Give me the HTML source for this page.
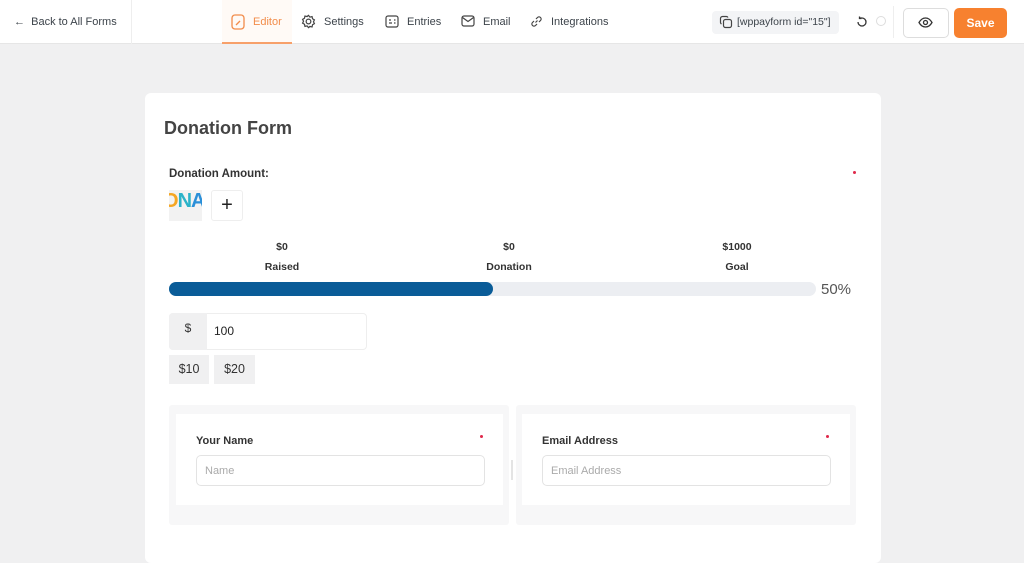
<!DOCTYPE html>
<html><head><meta charset="utf-8"><style>
*{box-sizing:border-box;margin:0;padding:0}
body{width:1024px;height:550px;overflow:hidden;background:#f0f0f1;font-family:"Liberation Sans",sans-serif;color:#1e1e1e;position:relative}
.a{position:absolute}
.hdr{left:0;top:0;width:1024px;height:44px;background:#fff;border-bottom:1px solid #e6e6e6}
.t{font-size:11px;color:#3c434a;white-space:nowrap}
.card{left:145px;top:93px;width:736px;height:470px;background:#fff;border-radius:6px}
.b{font-weight:bold;font-size:10.5px;color:#333;text-align:center;width:80px}
</style></head><body>
<div class="a hdr"></div>
<div class="a" style="left:131px;top:0;width:1px;height:44px;background:#eee"></div>
<div class="a t" style="left:14px;top:16px">←&nbsp; Back to All Forms</div>
<div class="a" style="left:222px;top:0;width:70px;height:44px;background:#fffaf6;border-bottom:2px solid #f7a06a"></div>
<svg class="a" style="left:231px;top:14px" width="14" height="16" viewBox="0 0 14 16" fill="none" stroke="#f28c4a" stroke-width="1.3"><rect x="1" y="1" width="12" height="14" rx="3"/><path d="M5 11l4-4"/></svg>
<div class="a t" style="left:253px;top:16px;color:#f28c4a">Editor</div>
<svg class="a" style="left:301px;top:14px" width="15" height="15" viewBox="0 0 16 16" fill="none" stroke="#444" stroke-width="1.3"><circle cx="8" cy="8" r="2.5"/><path d="M8 1.5l1.5 1.8 2.3-.5.5 2.3 2 1.2-1 2 1 2-2 1.2-.5 2.3-2.3-.5L8 14.5l-1.5-1.8-2.3.5-.5-2.3-2-1.2 1-2-1-2 2-1.2.5-2.3 2.3.5z"/></svg>
<div class="a t" style="left:324px;top:16px">Settings</div>
<svg class="a" style="left:385px;top:15px" width="14" height="13" viewBox="0 0 14 13" fill="none" stroke="#444" stroke-width="1.2"><rect x="1" y="1" width="12" height="11" rx="2"/><path d="M4 5h2M4 8h3M9 5h1.5M9 8h1.5"/></svg>
<div class="a t" style="left:407px;top:16px">Entries</div>
<svg class="a" style="left:461px;top:15px" width="14" height="12" viewBox="0 0 14 12" fill="none" stroke="#444" stroke-width="1.2"><rect x="1" y="1" width="12" height="10" rx="2"/><path d="M1.5 2.5L7 6.5l5.5-4"/></svg>
<div class="a t" style="left:483px;top:16px">Email</div>
<svg class="a" style="left:530px;top:15px" width="13" height="13" viewBox="0 0 13 13" fill="none" stroke="#444" stroke-width="1.2"><path d="M5.5 7.5l2-2M4 6L2.5 7.5a2.1 2.1 0 003 3L7 9M9 7l1.5-1.5a2.1 2.1 0 00-3-3L6 4"/></svg>
<div class="a t" style="left:551px;top:16px">Integrations</div>
<div class="a" style="left:712px;top:11px;width:127px;height:23px;background:#f3f4f6;border-radius:4px"></div>
<svg class="a" style="left:719px;top:15px" width="14" height="14" viewBox="0 0 14 14" fill="none" stroke="#444" stroke-width="1.2"><rect x="4.5" y="4.5" width="8" height="8" rx="2"/><path d="M9 2.5A2 2 0 007.5 1.5h-4a2 2 0 00-2 2v4a2 2 0 001 1.5"/></svg>
<div class="a t" style="left:737px;top:16px;font-size:10.5px">[wppayform id="15"]</div>
<svg class="a" style="left:856px;top:16px" width="12" height="12" viewBox="0 0 12 12" fill="none" stroke="#333" stroke-width="1.3"><path d="M2 6a4 4 0 104-4H3.5M3.5 0.5V2.5h2"/></svg>
<div class="a" style="left:876px;top:16px;width:10px;height:10px;border:1.3px solid #ddd;border-radius:50%"></div>
<div class="a" style="left:893px;top:6px;width:1px;height:32px;background:#eee"></div>
<div class="a" style="left:903px;top:8px;width:46px;height:30px;border:1px solid #ddd;border-radius:5px;background:#fff"></div>
<svg class="a" style="left:918px;top:17px" width="15" height="11" viewBox="0 0 15 11" fill="none" stroke="#333" stroke-width="1.3"><path d="M1 5.5C3 2 5 1 7.5 1S12 2 14 5.5C12 9 10 10 7.5 10S3 9 1 5.5z"/><circle cx="7.5" cy="5.5" r="2"/></svg>
<div class="a" style="left:954px;top:8px;width:53px;height:30px;background:#f7812f;border-radius:5px;color:#fff;font-weight:bold;font-size:12px;text-align:center;line-height:30px">Save</div>

<div class="a card"></div>
<div class="a" style="left:164px;top:118px;font-size:18px;font-weight:bold;color:#444">Donation Form</div>
<div class="a" style="left:169px;top:168px;font-size:11.5px;font-weight:bold;color:#333">Donation Amount:</div>
<div class="a" style="left:853px;top:171px;width:3px;height:3px;border-radius:50%;background:#e0284a"></div>
<div class="a" style="left:169px;top:190px;width:33px;height:31px;background:#f2f2f2;overflow:hidden;font-weight:bold;font-size:20px;line-height:22px;letter-spacing:-1px"><span style="color:#f5a623;margin-left:-6px">O</span><span style="color:#2bb3c9">N</span><span style="color:#2a8fd8">A</span></div>
<div class="a" style="left:211px;top:190px;width:32px;height:31px;border:1px solid #eee;border-radius:3px;text-align:center;font-size:20px;line-height:29px;color:#222">+</div>
<div class="a b" style="left:242px;top:241px">$0</div>
<div class="a b" style="left:242px;top:261px">Raised</div>
<div class="a b" style="left:469px;top:241px">$0</div>
<div class="a b" style="left:469px;top:261px">Donation</div>
<div class="a b" style="left:697px;top:241px">$1000</div>
<div class="a b" style="left:697px;top:261px">Goal</div>
<div class="a" style="left:169px;top:282px;width:647px;height:14px;background:#eceef2;border-radius:7px"></div>
<div class="a" style="left:169px;top:282px;width:324px;height:14px;background:#0a5c98;border-radius:7px"></div>
<div class="a" style="left:821px;top:281px;font-size:15px;color:#555">50%</div>
<div class="a" style="left:169px;top:313px;width:198px;height:37px;border:1px solid #eee;border-radius:4px;background:#fff"></div>
<div class="a" style="left:169px;top:313px;width:38px;height:37px;background:#f0f0f1;border-radius:4px 0 0 4px;text-align:center;font-size:12px;line-height:30px;color:#333">$</div>
<div class="a" style="left:214px;top:324px;font-size:12px;color:#222">100</div>
<div class="a" style="left:169px;top:355px;width:40px;height:29px;background:#f0f0f1;text-align:center;line-height:29px;font-size:12.5px;color:#333">$10</div>
<div class="a" style="left:214px;top:355px;width:41px;height:29px;background:#f0f0f1;text-align:center;line-height:29px;font-size:12.5px;color:#333">$20</div>

<div class="a" style="left:169px;top:405px;width:340px;height:120px;background:#f7f7f8;border-radius:3px"></div>
<div class="a" style="left:176px;top:414px;width:327px;height:91px;background:#fff"></div>
<div class="a" style="left:516px;top:405px;width:340px;height:120px;background:#f7f7f8;border-radius:3px"></div>
<div class="a" style="left:522px;top:414px;width:328px;height:91px;background:#fff"></div>
<div class="a" style="left:511px;top:460px;width:2px;height:20px;background:#e4e4e4"></div>
<div class="a" style="left:196px;top:435px;font-size:11px;font-weight:bold;color:#333">Your Name</div>
<div class="a" style="left:480px;top:435px;width:3px;height:3px;border-radius:50%;background:#e0284a"></div>
<div class="a" style="left:196px;top:455px;width:289px;height:31px;border:1px solid #e3e3e3;border-radius:5px;font-size:11px;color:#aaa;padding:9px 8px">Name</div>
<div class="a" style="left:542px;top:435px;font-size:11px;font-weight:bold;color:#333">Email Address</div>
<div class="a" style="left:826px;top:435px;width:3px;height:3px;border-radius:50%;background:#e0284a"></div>
<div class="a" style="left:542px;top:455px;width:289px;height:31px;border:1px solid #e3e3e3;border-radius:5px;font-size:11px;color:#aaa;padding:9px 8px">Email Address</div>
</body></html>
